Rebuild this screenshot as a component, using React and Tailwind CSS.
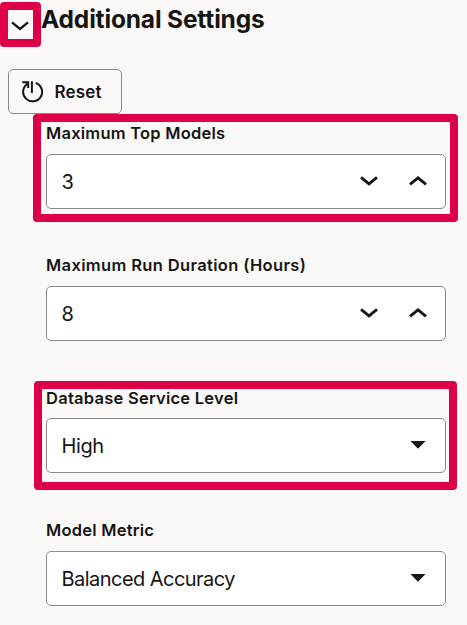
import React from "react";

function Chevron({ up = false, strokeWidth = 2.8 }) {
  return (
    <svg width="18" height="10" viewBox="0 0 18 10" fill="none" className="block shrink-0">
      <path
        d={up ? "M1 8.3 9 1.8 17 8.3" : "M1 1.4 9 7.9 17 1.4"}
        stroke="#161513"
        strokeWidth={strokeWidth}
      />
    </svg>
  );
}

function Caret() {
  return (
    <svg width="16" height="8" viewBox="0 0 16 8" className="block shrink-0">
      <path d="M0.5 0h15L8 7.8z" fill="#161513" />
    </svg>
  );
}

function ResetIcon() {
  return (
    <svg width="22" height="22" viewBox="0 0 22 22" fill="none" className="block shrink-0">
      <path d="M14.8 1.9A9.5 9.5 0 1 1 6 3.2" stroke="#161513" strokeWidth="2" />
      <path d="M1.3 1.2H7.2V7" stroke="#161513" strokeWidth="2" />
      <path d="M4.2 2.2H6.4V4.6z" fill="#161513" />
      <path d="M10.9 0.2V12" stroke="#161513" strokeWidth="2" />
    </svg>
  );
}

function Field({ label, value, stepper, className = "", labelClass, valueClass = "" }) {
  return (
    <div className={`flex h-[87px] flex-col ${className}`}>
      <label className={`h-8 text-[16.5px] leading-[22px] font-semibold whitespace-nowrap ${labelClass}`}>
        {label}
      </label>
      <div className="flex h-[55px] w-[400px] items-center justify-between rounded-[5px] border border-[#8b8a88] bg-white pr-[18px] pl-[14.5px]">
        <span className={`text-[20px] leading-[28px] ${valueClass}`}>{value}</span>
        {stepper ? (
          <div className="mb-px flex gap-[31px]">
            <Chevron />
            <Chevron up />
          </div>
        ) : (
          <div className="mr-px mb-[2px]"><Caret /></div>
        )}
      </div>
    </div>
  );
}

export default function App() {
  return (
    <main className="relative flex h-[625px] w-[467px] flex-col overflow-hidden bg-[#faf9f7] font-['Inter',sans-serif] text-[#161513]">
      <header className="flex h-[38px] items-start pl-[10.5px]">
        <div className="mt-[20.5px] w-[30.5px]"><Chevron strokeWidth={2.3} /></div>
        <h1 className="mt-[2.5px] text-[24.5px] leading-[32px] font-bold tracking-[-0.16px] whitespace-nowrap">
          Additional Settings
        </h1>
      </header>
      <button className="mt-[31px] ml-2 flex h-[45px] w-[114px] shrink-0 items-center gap-[11.5px] rounded-[5px] border border-[#8b8a88] pl-3">
        <ResetIcon />
        <span className="text-[17px] leading-6 font-semibold tracking-[0.2px]">Reset</span>
      </button>
      <section className="mt-[8px] flex flex-col pl-[46px]">
        <Field label="Maximum Top Models" value="3" stepper labelClass="tracking-[0.23px]" />
        <Field label="Maximum Run Duration (Hours)" value="8" stepper className="mt-[45px]" labelClass="tracking-[0.35px]" />
        <Field label="Database Service Level" value="High" className="mt-[45px]" labelClass="tracking-[0.25px] pt-px" valueClass="tracking-[-0.4px]" />
        <Field label="Model Metric" value="Balanced Accuracy" className="mt-[46px]" labelClass="tracking-[0.25px]" valueClass="tracking-[-0.54px]" />
      </section>
      <div className="absolute top-[2px] left-0 h-[45px] w-[41px] rounded-[4px] border-8 border-[#de0047]" />
      <div className="absolute top-[114px] left-[33px] h-[108px] w-[425px] rounded-[4px] border-8 border-[#de0047]" />
      <div className="absolute top-[381px] left-[34px] h-[109px] w-[423px] rounded-[4px] border-8 border-[#de0047]" />
    </main>
  );
}
